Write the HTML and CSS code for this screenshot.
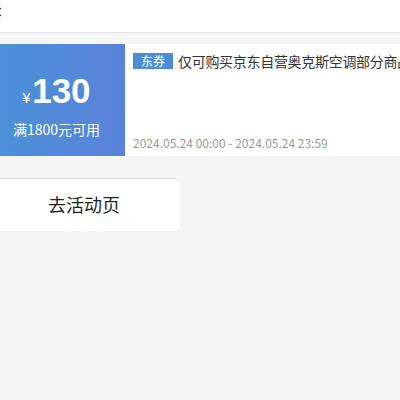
FILE: index.html
```html
<!DOCTYPE html>
<html>
<head>
<meta charset="utf-8">
<link rel="stylesheet" href="styles.css">
</head>
<body>
<div class="header">
  <svg class="back" width="16" height="16" viewBox="0 0 16 16"><path d="M10 4 L5 8 L10 12" fill="none" stroke="#444" stroke-width="1.4"/></svg>
</div>
<div class="page">
  <div class="coupon">
    <div class="left">
      <div class="amount"><span class="yen">¥</span><span class="num">130</span></div>
      <div class="cond">满1800元可用</div>
    </div>
    <div class="right">
      <div class="title"><span class="tag">东券</span><span class="desc">仅可购买京东自营奥克斯空调部分商品</span></div>
      <div class="date">2024.05.24 00:00 - 2024.05.24 23:59</div>
    </div>
  </div>
  <div class="btn">去活动页</div>
</div>
</body>
</html>
```
FILE: styles.css
```css
html, body {
  margin: 0;
  padding: 0;
  background: #f5f5f5;
  font-family: "Noto Sans CJK SC", "Noto Sans", sans-serif;
  overflow: hidden;
  width: 400px;
  height: 400px;
}
.header {
  height: 32px;
  background: #fff;
  border-bottom: 1px solid #e2e2e2;
  position: relative;
}
.back {
  position: absolute;
  left: -9px;
  top: 4px;
}
.page {
  margin-left: -12px;
  padding-top: 11px;
}
.coupon {
  display: flex;
  height: 112px;
  width: 600px;
}
.left {
  width: 137px;
  background: linear-gradient(90deg, #4a92d8 0%, #5a82da 100%);
  color: #fff;
  display: flex;
  flex-direction: column;
  align-items: center;
  justify-content: center;
}
.amount {
  display: flex;
  align-items: baseline;
  margin-top: 8px;
}
.yen {
  font-size: 14px;
  margin-right: 2px;
  font-family: "Liberation Sans", sans-serif;
}
.num {
  font-family: "Liberation Sans", Arial, sans-serif;
  font-weight: bold;
  font-size: 35px;
  line-height: 40px;
}
.cond {
  font-size: 14px;
  margin-top: 9px;
  line-height: 18px;
}
.right {
  flex: 1;
  background: #fff;
  margin-left: 1px;
  padding: 7px 7px 4px 7px;
  display: flex;
  flex-direction: column;
  justify-content: space-between;
}
.title {
  display: flex;
  align-items: center;
  white-space: nowrap;
}
.tag {
  background: #4a8fd6;
  color: #fff;
  font-size: 12px;
  line-height: 16px;
  padding: 0 8px;
  margin-right: 5px;
}
.desc {
  font-size: 14px;
  color: #333;
  line-height: 20px;
  letter-spacing: -0.3px;
}
.date {
  font-size: 12px;
  color: #999;
  line-height: 18px;
}
.btn {
  margin-top: 22px;
  width: 192px;
  height: 53px;
  background: #fff;
  border-top: 1px solid #d9d9d9;
  border-radius: 6px;
  box-sizing: border-box;
  display: flex;
  align-items: center;
  justify-content: center;
  font-size: 18px;
  color: #222;
  padding-bottom: 3px;
}
```
